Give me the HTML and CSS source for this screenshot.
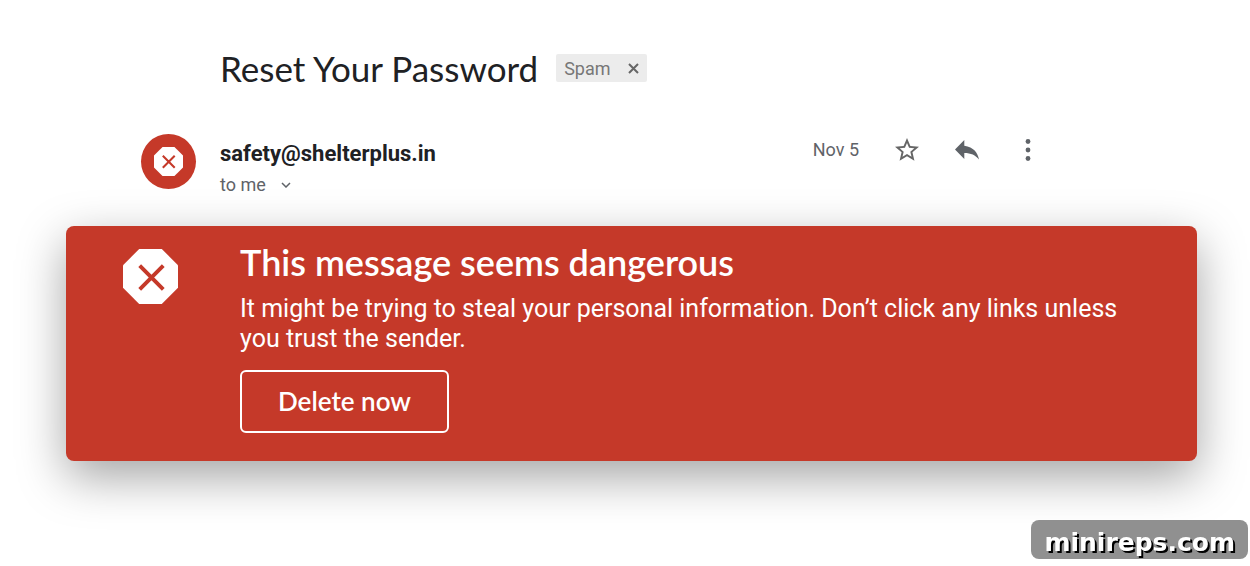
FILE: index.html
```html
<!DOCTYPE html>
<html lang="en">
<head>
    <meta charset="UTF-8">
    <meta name="viewport" content="width=device-width, initial-scale=1.0">
    <title>Reset Your Password</title>
    <link rel="stylesheet" href="styles.css">
</head>
<body>
    <main class="message">
        <div class="subject">
            <h1>Reset Your Password</h1>
            <div class="label">
                <span>Spam</span>
                <button type="button" class="icon-button" aria-label="Remove label Spam">
                    <svg width="11" height="11" viewBox="0 0 11 11" fill="none" stroke="#666" stroke-width="2">
                        <path d="M1 1l9 9M10 1l-9 9"/>
                    </svg>
                </button>
            </div>
        </div>

        <header class="sender">
            <div class="avatar">
                <svg width="29" height="29" viewBox="0 0 56 56">
                    <path d="M16.500 0h23L56 16.500v23L39.500 56h-23L0 39.500v-23z" fill="#fff"/>
                    <path d="M17 17l23 23M40 17L17 40" stroke="#c53929" stroke-width="4"/>
                </svg>
            </div>
            <div class="sender-info">
                <div class="email">safety@shelterplus.in</div>
                <div class="recipient">
                    <span>to me</span>
                    <button type="button" class="icon-button" aria-label="Show details">
                        <svg width="10" height="6" viewBox="0 0 10 6" fill="none" stroke="#5f6368" stroke-width="1.500">
                            <path d="M1 1l4 4 4-4"/>
                        </svg>
                    </button>
                </div>
            </div>
            <div class="actions">
                <span class="date">Nov 5</span>
                <button type="button" class="icon-button" aria-label="Star">
                    <svg width="24" height="24" viewBox="2 2 20 20" fill="#666">
                        <path d="M22 9.240l-7.190-.620L12 2 9.190 8.630 2 9.240l5.460 4.730L5.820 21 12 17.270 18.180 21l-1.630-7.030L22 9.240zM12 15.400l-3.760 2.270 1-4.280-3.320-2.880 4.380-.380L12 6.100l1.710 4.040 4.380.380-3.320 2.880 1 4.280L12 15.400z"/>
                    </svg>
                </button>
                <button type="button" class="icon-button" aria-label="Reply">
                    <svg width="24" height="20" viewBox="0 0 24 20" fill="#5f6368">
                        <path d="M9.300 5.800V0L0 9.500 9.300 19v-6.100c6.600 0 11.200 2 14.700 6.600C22.700 12.800 18.700 7.100 9.300 5.800z"/>
                    </svg>
                </button>
                <button type="button" class="icon-button" aria-label="More">
                    <svg width="6" height="22" viewBox="0 0 6 22" fill="#5f6368">
                        <circle cx="3" cy="2.500" r="2.400"/>
                        <circle cx="3" cy="11" r="2.400"/>
                        <circle cx="3" cy="19.500" r="2.400"/>
                    </svg>
                </button>
            </div>
        </header>

        <section class="warning">
            <svg class="warning-icon" width="55" height="55" viewBox="0 0 56 56">
                <path d="M16.500 0h23L56 16.500v23L39.500 56h-23L0 39.500v-23z" fill="#fff"/>
                <path d="M17 17l24 24M41 17L17 41" stroke="#c53929" stroke-width="4"/>
            </svg>
            <div class="warning-body">
                <h2>This message seems dangerous</h2>
                <p>It might be trying to steal your personal information. Don’t click any links unless you trust the sender.</p>
                <button type="button" class="delete-button">Delete now</button>
            </div>
        </section>
    </main>

    <div class="watermark">minireps.com</div>
</body>
</html>
```
FILE: styles.css
```css
:root {
    --danger: #c53929;
    --text: #202124;
    --muted: #5f6368;
}

* {
    box-sizing: border-box;
}

body {
    min-height: 100vh;
    margin: 0;
    background-color: #fff;
    color: var(--text);
    font-family: Roboto, sans-serif;
}

h1, h2, p {
    margin: 0;
}

.message {
    padding: 46px 53px 80px 66px;
}

.icon-button {
    display: flex;
    padding: 0;
    border: none;
    background: none;
    cursor: pointer;
}

.subject {
    display: flex;
    align-items: center;
    gap: 18px;
    padding-left: 154px;
}

.subject h1 {
    font-family: Lato, sans-serif;
    font-size: 35px;
    font-weight: 400;
    line-height: 44px;
}

.label {
    display: flex;
    align-items: center;
    gap: 17px;
    padding: 1px 8px 0;
    border-radius: 2px;
    background-color: #ececec;
    color: #777;
    font-size: 18px;
    line-height: 27px;
}

.sender {
    display: flex;
    align-items: flex-start;
    gap: 24px;
    margin-top: 44px;
    padding: 0 166px 0 75px;
}

.avatar {
    display: flex;
    align-items: center;
    justify-content: center;
    width: 55px;
    height: 55px;
    border-radius: 50%;
    background-color: var(--danger);
}

.sender-info {
    flex: 1;
    padding-top: 4px;
}

.email {
    font-size: 22px;
    font-weight: 700;
    line-height: 32px;
}

.recipient {
    display: flex;
    align-items: center;
    gap: 15px;
    color: var(--muted);
    font-size: 18px;
    line-height: 30px;
}

.actions {
    display: flex;
    align-items: center;
    gap: 36px;
    color: var(--muted);
    font-size: 18px;
    line-height: 32px;
}

.actions .icon-button:last-child {
    margin-left: 10px;
}

.warning {
    display: flex;
    gap: 62px;
    margin-top: 26px;
    padding: 15px 56px 28px 57px;
    border-radius: 8px;
    background-color: var(--danger);
    box-shadow: 0 16px 48px rgba(0, 0, 0, 0.36);
    color: #fff;
}

.warning-icon {
    flex: none;
    margin-top: 8px;
}

.warning h2 {
    font-family: Lato, sans-serif;
    font-size: 36px;
    font-weight: 600;
    line-height: 42px;
}

.warning p {
    margin-top: 11px;
    font-size: 25px;
    line-height: 30px;
}

.delete-button {
    margin-top: 16px;
    padding: 0 36px;
    border: 2px solid #fff;
    border-radius: 6px;
    background: none;
    color: #fff;
    font-family: Lato, sans-serif;
    font-size: 26px;
    font-weight: 600;
    line-height: 59px;
    cursor: pointer;
}

.watermark {
    position: fixed;
    right: 2px;
    bottom: 7px;
    padding: 6px 13px 0;
    border-radius: 8px;
    background-color: #909090;
    color: #fff;
    font-family: "DejaVu Sans", sans-serif;
    font-size: 25px;
    font-weight: 700;
    line-height: 33px;
    text-shadow: 2px 2px #000;
}
```
